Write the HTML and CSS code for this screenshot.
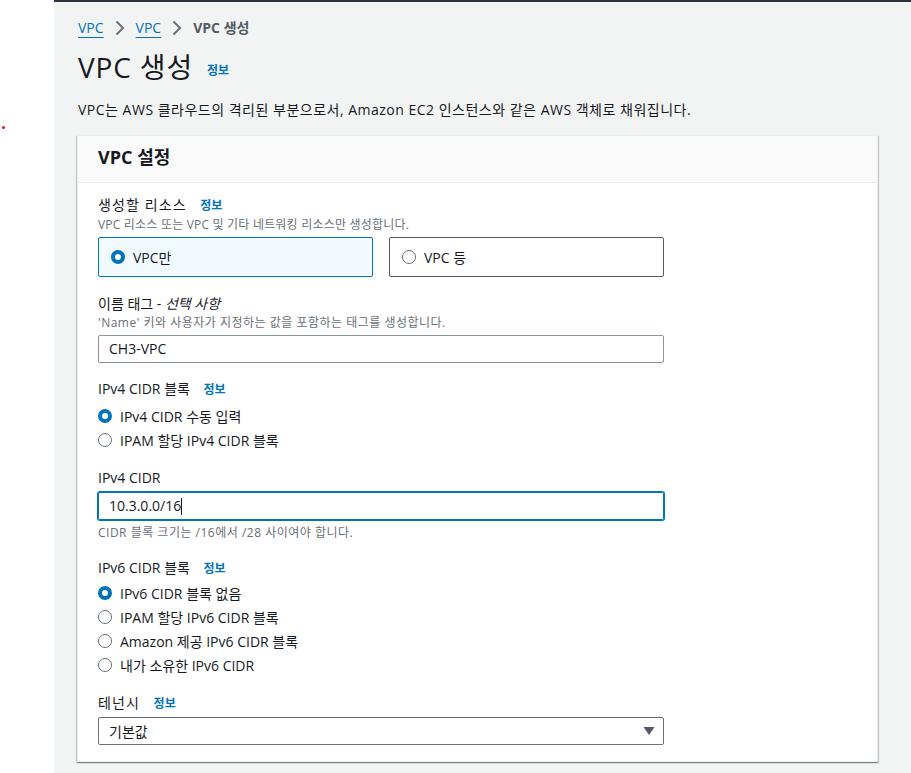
FILE: index.html
```html
<!DOCTYPE html>
<html lang="ko">
<head>
<meta charset="utf-8">
<title>VPC 생성</title>
<link rel="stylesheet" href="styles.css">
</head>
<body>
<div class="page">
  <aside class="strip"><span class="dot"></span></aside>
  <main class="main">
    <nav class="crumbs">
      <a class="crumb-link" href="#">VPC</a>
      <svg class="chev" width="10" height="16" viewBox="0 0 10 16"><path d="M1.5 1.5 L8 8 L1.5 14.5" fill="none" stroke="#687078" stroke-width="2"/></svg>
      <a class="crumb-link" href="#">VPC</a>
      <svg class="chev" width="10" height="16" viewBox="0 0 10 16"><path d="M1.5 1.5 L8 8 L1.5 14.5" fill="none" stroke="#687078" stroke-width="2"/></svg>
      <span class="crumb-current">VPC 생성</span>
    </nav>
    <h1 class="title">VPC 생성 <a class="info title-info" href="#">정보</a></h1>
    <p class="lead">VPC는 AWS 클라우드의 격리된 부분으로서, Amazon EC2 인스턴스와 같은 AWS 객체로 채워집니다.</p>

    <section class="card">
      <header class="card-head"><h2 class="card-title">VPC 설정</h2></header>
      <div class="card-body">

        <div class="field f-resource">
          <div class="label"><span class="label-ko">생성할 리소스</span> <a class="info" href="#">정보</a></div>
          <div class="desc desc-tight">VPC 리소스 또는 VPC 및 기타 네트워킹 리소스만 생성합니다.</div>
          <div class="tiles">
            <div class="tile tile-on"><span class="radio radio-on"></span><span>VPC만</span></div>
            <div class="tile"><span class="radio"></span><span>VPC 등</span></div>
          </div>
        </div>

        <div class="field f-name">
          <div class="label">이름 태그 - <em>선택 사항</em></div>
          <div class="desc">'Name' 키와 사용자가 지정하는 값을 포함하는 태그를 생성합니다.</div>
          <div class="input">CH3-VPC</div>
        </div>

        <div class="field f-v4block">
          <div class="label">IPv4 CIDR 블록 <a class="info" href="#">정보</a></div>
          <div class="radios">
            <div class="rrow"><span class="radio radio-on"></span><span>IPv4 CIDR 수동 입력</span></div>
            <div class="rrow"><span class="radio"></span><span>IPAM 할당 IPv4 CIDR 블록</span></div>
          </div>
        </div>

        <div class="field f-v4">
          <div class="label">IPv4 CIDR</div>
          <div class="input input-focus">10.3.0.0/16<span class="caret"></span></div>
          <div class="desc hint">CIDR 블록 크기는 /16에서 /28 사이여야 합니다.</div>
        </div>

        <div class="field f-v6block">
          <div class="label">IPv6 CIDR 블록 <a class="info" href="#">정보</a></div>
          <div class="radios radios-v6">
            <div class="rrow"><span class="radio radio-on"></span><span>IPv6 CIDR 블록 없음</span></div>
            <div class="rrow"><span class="radio"></span><span>IPAM 할당 IPv6 CIDR 블록</span></div>
            <div class="rrow"><span class="radio"></span><span>Amazon 제공 IPv6 CIDR 블록</span></div>
            <div class="rrow"><span class="radio"></span><span>내가 소유한 IPv6 CIDR</span></div>
          </div>
        </div>

        <div class="field f-tenancy">
          <div class="label"><span class="label-ko">테넌시</span> <a class="info" href="#">정보</a></div>
          <div class="select">
            <span>기본값</span>
            <svg class="caret-down" width="12" height="10" viewBox="0 0 12 10"><path d="M0.5 1 H11.5 L6 9 Z" fill="#545b64"/></svg>
          </div>
        </div>

      </div>
    </section>
  </main>
</div>
</body>
</html>
```

FILE: styles.css
```css
* { box-sizing: border-box; }
html, body { margin: 0; padding: 0; }
body {
  font-family: "Open Sans", "Noto Sans CJK KR", sans-serif;
  font-size: 14px;
  color: #16191f;
  background: #ffffff;
}
.page {
  display: flex;
  min-height: 773px;
}
.strip {
  width: 54px;
  flex: none;
  background: #ffffff;
  padding: 126px 0 0 2px;
}
.dot {
  display: block;
  width: 3px;
  height: 3px;
  border-radius: 50%;
  background: #e3141b;
}
.main {
  flex: 1;
  background: #f2f3f3;
  border-top: 2px solid #2b3440;
  padding: 16px 33px 0 24px;
  height: 773px;
  overflow: hidden;
}
.crumbs {
  display: flex;
  align-items: center;
  height: 20px;
  line-height: 20px;
  gap: 11px;
}
.crumb-link {
  color: #0073bb;
  text-decoration: underline;
  text-underline-offset: 4px;
  text-decoration-thickness: 1px;
}
.chev { display: block; }
.crumb-current {
  color: #545b64;
  font-weight: 700;
}
.title {
  margin: 11px 0 0;
  font-size: 28px;
  line-height: 36px;
  height: 36px;
  font-weight: 400;
  letter-spacing: 0.03em;
  display: flex;
  align-items: baseline;
}
.info {
  color: #0073bb;
  font-size: 12px;
  font-weight: 700;
  text-decoration: none;
  margin-left: 10px;
  letter-spacing: 0;
}
.title-info { margin-left: 14px; position: relative; top: -3px; }
.lead {
  margin: 15px 0 0;
  line-height: 20px;
  letter-spacing: 0.5px;
}
.card {
  margin: 15px 0 0 -1px;
  background: #ffffff;
  border: 1px solid #eaeded;
  box-shadow: 0 1px 1px rgba(0,28,36,0.3), 1px 1px 1px rgba(0,28,36,0.15), -1px 1px 1px rgba(0,28,36,0.15);
}
.card-head {
  background: #fafafa;
  border-bottom: 1px solid #eaeded;
  padding: 9px 20px 13px;
}
.card-title {
  margin: 0;
  font-size: 18px;
  line-height: 24px;
  font-weight: 700;
}
.card-body {
  padding: 12px 20px 16px;
  display: flex;
  flex-direction: column;
}
.field { display: flex; flex-direction: column; width: 566px; }
.label { line-height: 20px; }
.label-ko { letter-spacing: 1.1px; }
.label em { font-style: italic; }
.desc {
  font-size: 12px;
  line-height: 16px;
  color: #687078;
  letter-spacing: 0.5px;
}
.desc-tight { letter-spacing: 0.2px; }
.f-resource .desc { margin-top: 1px; }
.tiles {
  display: flex;
  gap: 16px;
  margin-top: 4px;
}
.tile {
  flex: 1;
  height: 40px;
  border: 1px solid #545b64;
  border-radius: 2px;
  display: flex;
  align-items: center;
  gap: 8px;
  padding: 0 12px;
}
.tile-on {
  border-color: #0073bb;
  background: #f1faff;
}
.radio {
  flex: none;
  width: 14px;
  height: 14px;
  border-radius: 50%;
  border: 1.5px solid #687078;
  background: #fff;
}
.radio-on {
  border: 4px solid #0073bb;
}
.f-name { margin-top: 17px; }
.f-name .desc { margin-top: 1px; }
.input {
  margin-top: 4px;
  height: 28px;
  border: 1px solid #879596;
  border-radius: 2px;
  padding: 0 10px;
  line-height: 26px;
  display: flex;
  align-items: center;
}
.input-focus {
  border-color: #0073bb;
  box-shadow: 0 0 0 1px #0073bb;
  margin-top: 4px;
}
.caret {
  display: inline-block;
  width: 1px;
  height: 17px;
  background: #16191f;
}
.f-v4block { margin-top: 16px; }
.radios {
  margin-top: 4px;
  display: flex;
  flex-direction: column;
}
.radios-v6 { margin-top: 2px; }
.rrow {
  height: 24px;
  display: flex;
  align-items: center;
  gap: 8px;
}
.f-v4 { margin-top: 16px; }
.hint { margin-top: 5px; }
.f-v6block { margin-top: 17px; }
.f-tenancy { margin-top: 16px; }
.select {
  margin-top: 3px;
  height: 28px;
  border: 1px solid #687078;
  border-radius: 2px;
  padding: 0 8px 0 10px;
  display: flex;
  align-items: center;
  justify-content: space-between;
}
.caret-down { display: block; }
```
